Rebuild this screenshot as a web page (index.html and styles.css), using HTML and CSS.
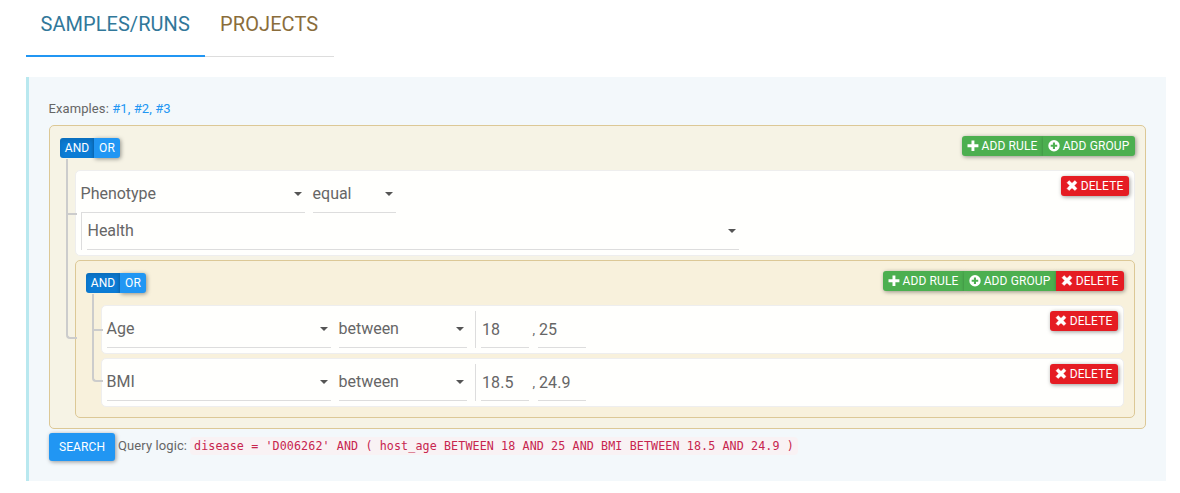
FILE: index.html
```html
<!DOCTYPE html>
<html lang="en">
<head>
<meta charset="utf-8">
<title>Samples/Runs search</title>
<link rel="stylesheet" href="styles.css">
</head>
<body>
<svg class="defs" aria-hidden="true">
  <symbol id="plus" viewBox="0 0 12 12"><path d="M4.5 .5h2.9v3.8h4v2.9h-4V11H4.5V7.2h-4V4.3h4z"/></symbol>
  <symbol id="plus-circle" viewBox="0 0 12 12"><path fill-rule="evenodd" d="M6 0a5.7 5.7 0 1 0 0 11.4A5.7 5.7 0 0 0 6 0zM4.9 2.5h2.1v2.2h2.2v2.1H7V9H4.9V6.8H2.7V4.7h2.2z"/></symbol>
  <symbol id="cross" viewBox="0 0 12 12"><path d="M3.1 .6 6 3.3 8.9 .6 11 2.7 8.3 5.6l2.7 2.9-2.1 2.1L6 7.9l-2.9 2.7L1 8.5l2.7-2.9L1 2.7z" stroke="#fff" stroke-width=".4" stroke-linejoin="round"/></symbol>
</svg>
<ul class="tabs">
  <li class="tab tab-active">SAMPLES/RUNS</li>
  <li class="tab">PROJECTS</li>
</ul>
<main class="panel">
  <p class="examples">Examples: <a>#1, </a><a>#2, </a><a>#3</a></p>
  <section class="group">
    <header class="group-head">
      <div class="conditions"><button class="btn btn-and">AND</button><button class="btn btn-or">OR</button></div>
      <div class="actions"><button class="btn btn-green btn-rule"><svg class="icon"><use href="#plus"/></svg>ADD RULE</button><button class="btn btn-green btn-group"><svg class="icon"><use href="#plus-circle"/></svg>ADD GROUP</button></div>
    </header>
    <div class="rules">
      <div class="node rule">
        <div class="fields">
          <div class="select select-filter">Phenotype</div>
          <div class="select select-equal">equal</div>
          <div class="value value-wide"><div class="select select-wide">Health</div></div>
        </div>
        <button class="btn btn-red"><svg class="icon"><use href="#cross"/></svg>DELETE</button>
      </div>
      <section class="node group">
        <header class="group-head">
          <div class="conditions"><button class="btn btn-and">AND</button><button class="btn btn-or">OR</button></div>
          <div class="actions"><button class="btn btn-green btn-rule"><svg class="icon"><use href="#plus"/></svg>ADD RULE</button><button class="btn btn-green btn-group"><svg class="icon"><use href="#plus-circle"/></svg>ADD GROUP</button><button class="btn btn-red"><svg class="icon"><use href="#cross"/></svg>DELETE</button></div>
        </header>
        <div class="rules">
          <div class="node rule">
            <div class="fields">
              <div class="select select-filter">Age</div>
              <div class="select select-between">between</div>
              <div class="value"><div class="number">18</div><span class="comma">,</span><div class="number">25</div></div>
            </div>
            <button class="btn btn-red"><svg class="icon"><use href="#cross"/></svg>DELETE</button>
          </div>
          <div class="node rule">
            <div class="fields">
              <div class="select select-filter">BMI</div>
              <div class="select select-between">between</div>
              <div class="value"><div class="number">18.5</div><span class="comma">,</span><div class="number">24.9</div></div>
            </div>
            <button class="btn btn-red"><svg class="icon"><use href="#cross"/></svg>DELETE</button>
          </div>
        </div>
      </section>
    </div>
  </section>
  <footer class="query">
    <button class="btn btn-search">SEARCH</button>
    <span class="query-label">Query logic:</span>
    <code class="logic">disease = 'D006262' AND ( host_age BETWEEN 18 AND 25 AND BMI BETWEEN 18.5 AND 24.9 )</code>
  </footer>
</main>
</body>
</html>
```
FILE: styles.css
```css
* { box-sizing: border-box; }
body {
  margin: 0;
  padding: 0 14px 0 26px;
  background: #fff;
  color: #666;
  font: 13px/20px Roboto, sans-serif;
  letter-spacing: .1px;
  overflow: hidden;
}
.defs { display: none; }
.tabs { display: flex; margin: 0 0 20px; padding: 0; list-style: none; }
.tab {
  width: 129px;
  height: 57px;
  padding: 9px 0 0 15px;
  border-bottom: 1px solid #ddd;
  color: #8a6d3b;
  font-size: 20px;
  line-height: 30px;
  white-space: nowrap;
}
.tab-active { width: 179px; padding-left: 14.5px; border-bottom: 2px solid #2196f3; color: #31789a; letter-spacing: .05px; }
.panel {
  height: 404px;
  padding: 22px 20px 0;
  border-left: 3px solid #b9e8ef;
  background: #f3f8fb;
}
.examples { margin: 0 0 6px -.5px; }
.examples a { color: #2196f3; }
.group {
  padding: 10px;
  border: 1px solid #dcc896;
  border-radius: 5px;
  background: #f6f3e5;
}
.group .group { background: #f8f1dc; }
.group-head { display: flex; justify-content: space-between; height: 34px; }
.conditions, .actions { display: flex; }
.conditions { padding-top: 2px; }
.btn {
  display: flex;
  align-items: center;
  justify-content: center;
  height: 20px;
  padding: 0;
  border: 0;
  border-radius: 3px;
  color: #fff;
  font: 12px/18px Roboto, sans-serif;
  letter-spacing: .1px;
  white-space: nowrap;
  box-shadow: 1px 1px 4px rgba(0, 0, 0, .4);
}
.btn-and {
  width: 34px;
  border-radius: 3px 0 0 3px;
  background: #0c7cd5;
  box-shadow: inset 0 3px 5px rgba(0, 0, 0, .125);
}
.btn-or { width: 26px; border-radius: 0 3px 3px 0; background: #2196f3; }
.btn-green { background: #4caf50; }
.btn-rule { width: 81px; border-radius: 3px 0 0 3px; }
.btn-group { width: 92px; border-radius: 0 3px 3px 0; }
.btn-red { width: 68px; background: #e51c23; }
.actions .btn-group:not(:last-child) { border-radius: 0; }
.actions .btn-red { border-radius: 0 3px 3px 0; }
.icon { width: 12px; height: 12px; margin: 0 3px 0 -1px; fill: #fff; }
.rules { display: grid; gap: 4px; padding-left: 15px; }
.node { position: relative; }
.node::before, .node::after {
  content: "";
  position: absolute;
  left: -10px;
  width: 9px;
  height: calc(50% + 2px);
  border: 0 solid #ccc;
}
.node::before { top: -4px; border-width: 0 0 2px 2px; }
.node::after { top: 50%; height: calc(50% + 4px); border-left-width: 2px; }
.node:first-child::before { top: -12px; height: calc(50% + 12px); }
.node:last-child::before { border-bottom-left-radius: 4px; }
.node:last-child::after { display: none; }
.node .node::before { height: calc(50% + 1.4px); }
.node .node:first-child::before { height: calc(50% + 11.4px); }
.rule {
  display: flex;
  justify-content: space-between;
  align-items: flex-start;
  padding: 5px;
  border: 1px solid #eee;
  border-radius: 5px;
  background: #fffffd;
}
.fields { display: flex; flex-wrap: wrap; column-gap: 8px; width: 680px; }
.select {
  display: flex;
  align-items: center;
  justify-content: space-between;
  height: 37px;
  padding-right: 3px;
  border-bottom: 1px solid #ddd;
  font-size: 16px;
  letter-spacing: -.03px;
}
.select::after {
  content: "";
  border: solid transparent;
  border-width: 4.5px 4.5px 0;
  border-top-color: #555;
}
.fields > .select { text-indent: -.4px; }
.select-filter { width: 224px; }
.select-equal { width: 83px; }
.select-between { width: 128px; }
.value { display: flex; height: 37px; padding-left: 5px; border-left: 1px solid #ddd; }
.value-wide { width: 658px; }
.select-wide { width: 652px; padding-left: .5px; }
.number {
  width: 48px;
  height: 37px;
  padding: 9px 0 0 1px;
  border-bottom: 1px solid #ddd;
  font-size: 16px;
}
.comma { width: 9px; padding: 9px 0 0 3.5px; }
.query { display: flex; align-items: flex-start; padding-top: 4px; }
.btn-search { width: 66px; height: 28px; margin-right: 3px; background: #2196f3; }
.query-label { width: 72px; padding-top: 3px; white-space: nowrap; }
.logic {
  margin-top: 4px;
  padding: 2px 4px;
  border-radius: 4px;
  background: #f9f2f4;
  color: #c7254e;
  font: 11.7px/14px "DejaVu Sans Mono", monospace;
  letter-spacing: .105px;
  white-space: nowrap;
}
```
